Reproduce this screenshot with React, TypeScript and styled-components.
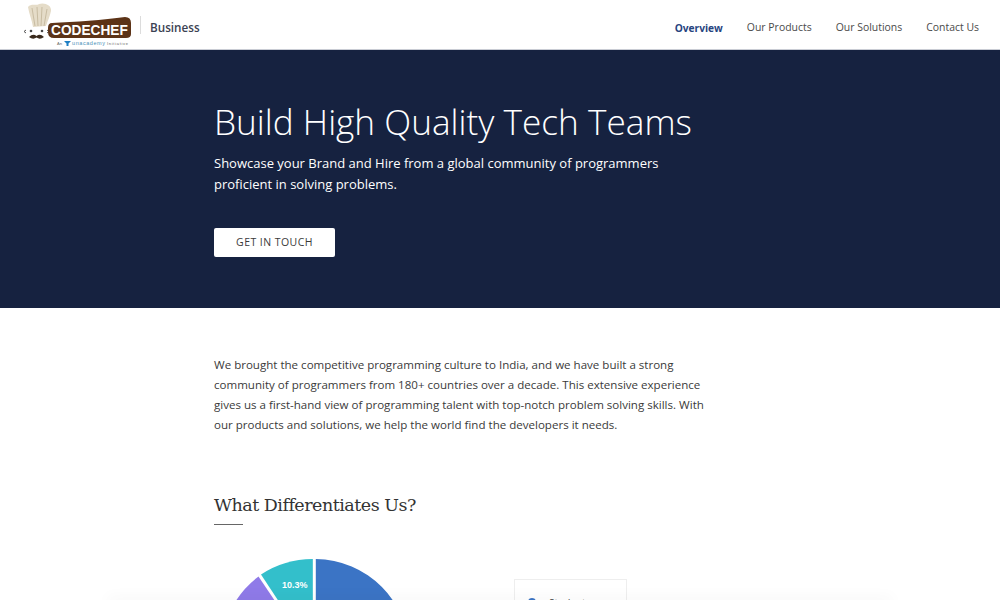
import React from 'react';
import styled, { createGlobalStyle } from 'styled-components';

const GlobalStyle = createGlobalStyle`
  html, body {
    margin: 0;
    padding: 0;
    background: #fff;
  }
  body {
    font-family: 'Open Sans', sans-serif;
    height: 600px;
    overflow: hidden;
  }
`;

const Page = styled.div`
  width: 1000px;
  height: 600px;
  overflow: hidden;
  position: relative;
`;

const Header = styled.header`
  height: 49px;
  padding: 0 21px 0 24px;
  display: flex;
  align-items: center;
  justify-content: space-between;
  background: #fff;
  border-bottom: 1px solid #c9ccd4;
`;

const Brand = styled.div`
  display: flex;
  align-items: center;
`;

const Divider = styled.span`
  width: 1px;
  height: 18px;
  margin: 0 9px 0 8px;
  background: #dcdcdc;
`;

const BrandName = styled.span`
  font-size: 11.7px;
  font-weight: 600;
  color: #3b4252;
  margin-top: 4px;
`;

const Nav = styled.nav`
  display: flex;
  gap: 24px;
  padding-top: 6px;
`;

const NavLink = styled.a<{ $active?: boolean }>`
  font-size: ${(p) => (p.$active ? '10.2px' : '10.45px')};
  font-weight: ${(p) => (p.$active ? 700 : 400)};
  color: ${(p) => (p.$active ? '#27447f' : '#4a4a4a')};
  margin-top: ${(p) => (p.$active ? '1px' : '0')};
`;

const Hero = styled.section`
  height: 258px;
  background: #162240;
  padding: 48px 0 0 214px;
  box-sizing: border-box;
`;

const HeroTitle = styled.h1`
  margin: 0;
  font-size: 35.2px;
  line-height: 46px;
  font-weight: 300;
  color: #fff;
`;

const HeroText = styled.p`
  margin: 9px 0 0;
  font-size: 13px;
  line-height: 21px;
  color: #fff;
`;

const HeroButton = styled.a`
  margin-top: 33px;
  width: 121px;
  height: 29px;
  padding-bottom: 1px;
  box-sizing: border-box;
  display: flex;
  align-items: center;
  justify-content: center;
  background: #fff;
  border-radius: 2px;
  font-size: 10.5px;
  letter-spacing: 0.45px;
  color: #3a3a3a;
`;

const Content = styled.main`
  padding: 47px 0 0 214px;
`;

const Intro = styled.p`
  margin: 0;
  width: 520px;
  font-size: 11.55px;
  line-height: 20px;
  color: #3a3a3a;
  white-space: nowrap;
`;

const SectionTitle = styled.h2`
  margin: 56px 0 0;
  font-family: 'DejaVu Serif', serif;
  font-size: 17.5px;
  line-height: 28px;
  font-weight: 400;
  letter-spacing: -0.5px;
  color: #333;
`;

const TitleRule = styled.div`
  width: 29px;
  height: 1px;
  margin-top: 5px;
  background: #666;
`;

const ChartRow = styled.div`
  display: flex;
  align-items: flex-start;
  margin-top: 34px;
`;

const Legend = styled.div`
  margin: 20px 0 0 100px;
  width: 113px;
  height: 60px;
  border: 1px solid #eee;
  box-sizing: border-box;
  padding: 16px 13px;
  display: flex;
  gap: 13px;
  font-size: 10px;
  color: #444;
`;

const LegendDot = styled.span`
  width: 8px;
  height: 8px;
  margin-top: 2px;
  border-radius: 50%;
  background: #3b74c5;
`;

const BottomShadow = styled.div`
  position: absolute;
  left: 110px;
  right: 110px;
  bottom: -2px;
  height: 2px;
  box-shadow: 0 0 14px 3px rgba(0, 0, 0, 0.04);
`;

const Logo = () => (
  <svg width="108" height="46" viewBox="0 0 108 46">
    {/* hat */}
    <path d="M4 5 C7 1 12 4 15 2 C20 0 28 3 27 9 C26 14 24 18 22 24 L9 25 C8 18 5 12 4 5 Z" fill="#e5dcc8" />
    <path d="M8 6 L11 24 M13 5 L14 24 M18 5 L17 24 M23 7 L20 24" stroke="#c8bca2" strokeWidth="1" fill="none" />
    {/* face */}
    <path d="M2 28 L0 29.5 L2 31 M23 28 L25 29.5 L23 31" stroke="#555" strokeWidth="1" fill="none" />
    <circle cx="7" cy="29" r="1.3" fill="#444" />
    <circle cx="18" cy="29" r="1.3" fill="#444" />
    <path d="M5 35 Q9 31 12.5 34 Q16 31 20 35 Q16 38 12.5 35.5 Q9 38 5 35 Z" fill="#3a2a1c" />
    {/* banner */}
    <path d="M28 21 C50 20 80 18 101 15 Q107 15 107 21 V32 Q107 36 102 36 H30 Q24 36 24 30 V26 Q24 21 28 21 Z" fill="#5c3317" />
    <text transform="translate(27 33) scale(0.945 1)" fontFamily="Liberation Sans, sans-serif" fontSize="14.5" fontWeight="700" fill="#fff">CODECHEF</text>
    {/* tag line */}
    <text x="33" y="43" fontFamily="Liberation Sans, sans-serif" fontSize="4" fill="#666">An</text>
    <path d="M40 39 H47 L44.5 41.5 V44 H42.5 V41.5 Z" fill="#1f7fc4" />
    <text x="48" y="43" fontFamily="Liberation Sans, sans-serif" fontSize="5.5" fill="#4a90b8" textLength="33">unacademy</text>
    <text x="83" y="43" fontFamily="Liberation Sans, sans-serif" fontSize="4" fill="#666" textLength="21">Initiative</text>
  </svg>
);

const Pie = () => (
  <svg width="200" height="190" viewBox="0 0 200 190">
    <path d="M101.8 0 A94 94 0 1 1 7 94 L101.8 94 Z" fill="#3b74c5" />
    <path d="M98.8 0 V94 L47 15.5 A94 94 0 0 1 98.8 0 Z" fill="#33bfcb" />
    <path d="M44.5 17.5 L96 94 L7 94 A94 94 0 0 1 44.5 17.5 Z" fill="#8f7ae8" />
    <text x="68" y="28.5" fontFamily="Liberation Sans, sans-serif" fontSize="9" fontWeight="700" fill="#fff">10.3%</text>
  </svg>
);

const App = () => {
  return (
    <Page>
      <GlobalStyle />
      <Header>
        <Brand>
          <Logo />
          <Divider />
          <BrandName>Business</BrandName>
        </Brand>
        <Nav>
          <NavLink $active>Overview</NavLink>
          <NavLink>Our Products</NavLink>
          <NavLink>Our Solutions</NavLink>
          <NavLink>Contact Us</NavLink>
        </Nav>
      </Header>
      <Hero>
        <HeroTitle>Build High Quality Tech Teams</HeroTitle>
        <HeroText>
          Showcase your Brand and Hire from a global community of programmers
          <br />
          proficient in solving problems.
        </HeroText>
        <HeroButton>GET IN TOUCH</HeroButton>
      </Hero>
      <Content>
        <Intro>
          We brought the competitive programming culture to India, and we have built a strong
          <br />
          community of programmers from 180+ countries over a decade. This extensive experience
          <br />
          gives us a first-hand view of programming talent with top-notch problem solving skills. With
          <br />
          our products and solutions, we help the world find the developers it needs.
        </Intro>
        <SectionTitle>What Differentiates Us?</SectionTitle>
        <TitleRule />
        <ChartRow>
          <Pie />
          <Legend>
            <LegendDot />
            Students
          </Legend>
        </ChartRow>
      </Content>
      <BottomShadow />
    </Page>
  );
};

export default App;
